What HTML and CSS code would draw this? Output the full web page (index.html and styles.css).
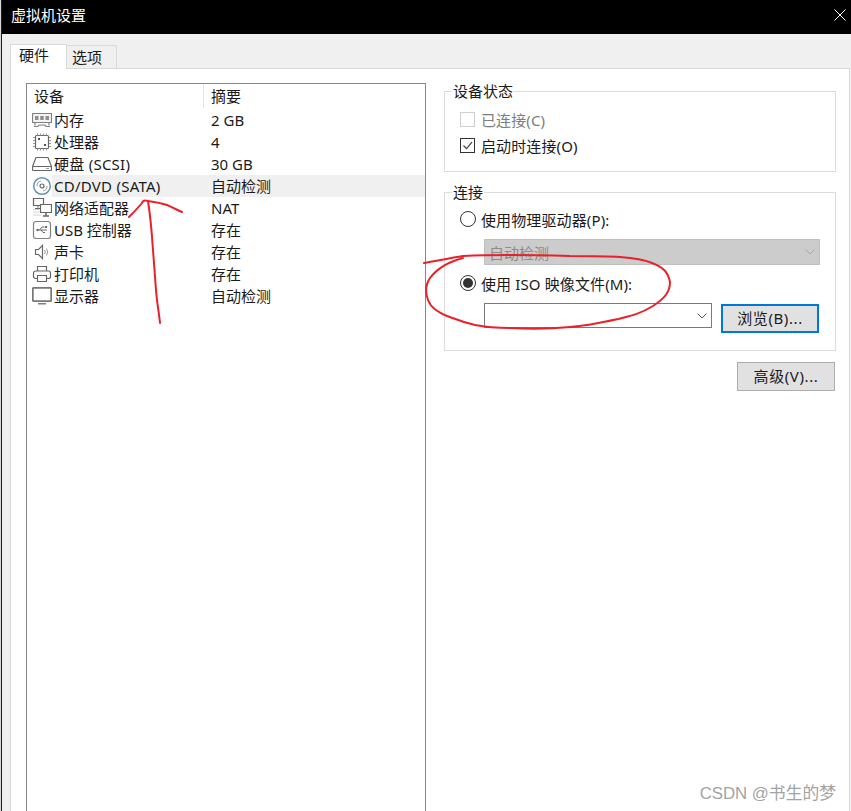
FILE: index.html
```html
<!doctype html>
<html lang="zh-CN">
  <head>
    <meta charset="UTF-8" />
    <meta name="viewport" content="width=device-width, initial-scale=1.0" />
    <title>虚拟机设置</title>
    <link rel="stylesheet" href="styles.css">
  </head>
  <body>
    <div class="window">
      <div class="titlebar">
        <span class="title">虚拟机设置</span>
        <svg class="close" width="12" height="12" viewBox="0 0 12 12"><path d="M0.5 0.5L11.5 11.5M11.5 0.5L0.5 11.5" stroke="#fff" fill="none"/></svg>
      </div>

      <div class="tabs">
        <div class="tab active">硬件</div>
        <div class="tab">选项</div>
      </div>

      <div class="page">
        <div class="device-list">
          <div class="list-head">
            <div class="head-name">设备</div>
            <div class="head-sum">摘要</div>
          </div>

          <div class="row">
            <svg class="icon" width="20" height="22" viewBox="0 0 20 22"><path d="M0.500 4.500h19v9h-19zM3 16.500v-3M17 16.500v-3M2 17.500h4l1-1.500h6l1 1.500h4" fill="#f4f4f4" stroke="#808080" stroke-width="1.200"/><path d="M3 7h3.500v4H3zM8.200 7h3.500v4H8.200zM13.500 7H17v4h-3.500z" fill="#8f8f8f"/></svg>
            <div class="row-body"><span class="name">内存</span><span class="sum">2 GB</span></div>
          </div>
          <div class="row">
            <svg class="icon" width="20" height="22" viewBox="0 0 20 22"><rect x="3.500" y="4.500" width="13" height="13" rx="1" fill="none" stroke="#666" stroke-width="1.200"/><path d="M1 6.500h2M1 9.500h2M1 12.500h2M1 15.500h2M17 6.500h2M17 9.500h2M17 12.500h2M17 15.500h2M5.500 2.500v2M8.500 2.500v2M11.500 2.500v2M14.500 2.500v2M5.500 17.500v2M8.500 17.500v2M11.500 17.500v2M14.500 17.500v2" stroke="#999"/><path d="M6 7h2v2H6zM12 13h2v2h-2z" fill="#555"/></svg>
            <div class="row-body"><span class="name">处理器</span><span class="sum">4</span></div>
          </div>
          <div class="row">
            <svg class="icon" width="20" height="22" viewBox="0 0 20 22"><path d="M0.500 13.500L4 4.500h12l3.500 9M1.500 13.500h17a1 1 0 0 1 1 1v2a1 1 0 0 1-1 1h-17a1 1 0 0 1-1-1v-2a1 1 0 0 1 1-1z" fill="none" stroke="#666" stroke-width="1.200"/><path d="M14 15.500h3" stroke="#999"/></svg>
            <div class="row-body"><span class="name wide">硬盘 (SCSI)</span><span class="sum">30 GB</span></div>
          </div>
          <div class="row">
            <svg class="icon" width="20" height="22" viewBox="0 0 20 22"><circle cx="10" cy="11" r="8.300" fill="none" stroke="#5f93b3" stroke-width="1.500"/><circle cx="10" cy="11" r="2" fill="none" stroke="#666" stroke-width="1.200"/><path d="M5 11a5 5 0 0 1 4-5M15 11a5 5 0 0 1-4 5" fill="none" stroke="#999"/></svg>
            <div class="row-body selected"><span class="name wide">CD/DVD (SATA)</span><span class="sum">自动检测</span></div>
          </div>
          <div class="row">
            <svg class="icon" width="20" height="22" viewBox="0 0 20 22"><path d="M1.500 1.500h10v7h-10zM6 8.500v2M3 11.500h6" fill="none" stroke="#666" stroke-width="1.200"/><path d="M8.500 7.500h11v8h-11z" fill="#fff" stroke="#666" stroke-width="1.200"/><path d="M14 15.500v3M11 19h6" stroke="#666" stroke-width="1.500"/><path d="M1.500 12.500h5M1.500 15h5M1.500 18h7" stroke="#a5a5a5" stroke-dasharray="1 1"/></svg>
            <div class="row-body"><span class="name">网络适配器</span><span class="sum">NAT</span></div>
          </div>
          <div class="row">
            <svg class="icon" width="20" height="22" viewBox="0 0 20 22"><rect x="1.500" y="2.500" width="17" height="17" rx="2.500" fill="none" stroke="#808080" stroke-width="1.200"/><path d="M5 11h10M7.500 11l2.500-3h2.500M9 11l2 2.500h2" fill="none" stroke="#6a6a6a"/><circle cx="5.500" cy="11" r="1.200" fill="#6a6a6a"/><path d="M13 7h2v2h-2z" fill="#6a6a6a"/></svg>
            <div class="row-body"><span class="name">USB 控制器</span><span class="sum">存在</span></div>
          </div>
          <div class="row">
            <svg class="icon" width="20" height="22" viewBox="0 0 20 22"><path d="M3.500 8.500h3l4-4v13l-4-4h-3z" fill="none" stroke="#6a6a6a" stroke-width="1.200"/><path d="M12.500 9a3 3 0 0 1 0 4M14.500 7.500a6 6 0 0 1 0 7" fill="none" stroke="#999"/></svg>
            <div class="row-body"><span class="name">声卡</span><span class="sum">存在</span></div>
          </div>
          <div class="row">
            <svg class="icon" width="20" height="22" viewBox="0 0 20 22"><path d="M5.500 8V3.500h9V8M5.500 15.500h-2a2 2 0 0 1-2-2v-3.500a2 2 0 0 1 2-2h13a2 2 0 0 1 2 2v3.500a2 2 0 0 1-2 2h-2M5.500 12.500h9v6h-9z" fill="none" stroke="#666" stroke-width="1.200"/></svg>
            <div class="row-body"><span class="name">打印机</span><span class="sum">存在</span></div>
          </div>
          <div class="row">
            <svg class="icon" width="20" height="22" viewBox="0 0 20 22"><rect x="0.800" y="2.800" width="18.400" height="13.400" rx="1" fill="none" stroke="#777" stroke-width="1.800"/><path d="M6 18h8v1.500H6z" fill="#808080"/></svg>
            <div class="row-body"><span class="name">显示器</span><span class="sum">自动检测</span></div>
          </div>
        </div>

        <div class="side">
          <fieldset class="group status-group">
            <legend>设备状态</legend>
            <div class="opt disabled"><span class="check"></span>已连接(C)</div>
            <div class="opt">
              <span class="check on">
                <svg width="13" height="13" viewBox="0 0 13 13"><path d="M2.500 6.500l3 3.200 5.500-6.500" fill="none" stroke="#444" stroke-width="1.200"/></svg>
              </span>启动时连接(O)
            </div>
          </fieldset>

          <fieldset class="group conn-group">
            <legend>连接</legend>
            <div class="opt"><span class="radio"></span>使用物理驱动器(P):</div>
            <div class="select off">
              <span>自动检测</span>
              <svg width="10" height="6" viewBox="0 0 10 6"><path d="M0.500 0.500L5 5l4.500-4.500" fill="none" stroke="#a8a8a8"/></svg>
            </div>
            <div class="opt iso"><span class="radio on"></span>使用 ISO 映像文件(M):</div>
            <div class="file-row">
              <div class="select combo">
                <span></span>
                <svg width="10" height="6" viewBox="0 0 10 6"><path d="M0.500 0.500L5 5l4.500-4.500" fill="none" stroke="#555"/></svg>
              </div>
              <div class="btn focus">浏览(B)...</div>
            </div>
          </fieldset>

          <div class="btn-row"><div class="btn">高级(V)...</div></div>
        </div>
      </div>

      <svg class="marks" width="851" height="811" viewBox="0 0 851 811">
        <path d="M160 323C159 313 157 303 156 290C155 275 154 262 153 250C152 235 151 220 148 201C145 200 143 200 142 203C138 208 133 213 129 217M148 201C155 202 161 203 167 205C172 207 177 210 182 212" fill="none" stroke="#e8212b" stroke-width="2" stroke-linecap="round"/>
        <path d="M424 263C436 261 450 258 463 256C500 254 540 255 570 256C590 256 606 256 620 257C635 258 645 260 652 263C663 267 668 272 670 282C670 292 665 298 653 306C640 314 630 316 618 319C600 323 585 326 570 327C550 329 530 329 510 328C495 328 485 327 475 325C462 322 455 319 447 316C438 312 431 308 428 300C425 292 426 284 430 278C436 270 448 262 463 258" fill="none" stroke="#e8212b" stroke-width="2" stroke-linecap="round"/>
      </svg>

      <div class="watermark">CSDN @书生的梦</div>
    </div>
  </body>
</html>
```

FILE: styles.css
```css
html,
body {
  margin: 0;
  padding: 0;
}
body {
  font-family: "Noto Sans", "Noto Sans CJK SC", sans-serif;
  font-size: 15px;
  color: #1a1a1a;
  background-color: #d8d8d8;
}
.window {
  position: relative;
  margin-left: 1px;
  height: 811px;
  overflow: hidden;
  border-left: 1px solid #1c1c1c;
  background-color: #f0f0f0;
  display: flex;
  flex-direction: column;
}
.titlebar {
  flex: none;
  box-sizing: border-box;
  height: 34px;
  padding: 0 0 5px 9px;
  display: flex;
  align-items: center;
  justify-content: space-between;
  background-color: #000;
  color: #fff;
}
.close {
  margin-right: 5px;
}
.tabs {
  flex: none;
  height: 24px;
  margin-top: 10px;
  padding-left: 8px;
  display: flex;
  align-items: flex-end;
  position: relative;
  z-index: 1;
}
.tab {
  box-sizing: border-box;
  width: 50px;
  height: 23px;
  padding-left: 5px;
  line-height: 23px;
  background-color: #f0f0f0;
  border: 1px solid #d9d9d9;
  border-bottom: none;
  border-left: none;
}
.tab.active {
  width: 57px;
  height: 25px;
  margin-bottom: -1px;
  padding-left: 8px;
  line-height: 20px;
  background-color: #fff;
  border-left: 1px solid #d9d9d9;
}
.page {
  flex: none;
  height: 760px;
  margin: 0 1px 0 8px;
  box-sizing: border-box;
  background-color: #fff;
  border: 1px solid #d9d9d9;
  padding: 14px 13px 0 15px;
  display: flex;
}
.device-list {
  box-sizing: border-box;
  width: 400px;
  height: 760px;
  border: 1px solid #828790;
  flex: none;
}
.list-head {
  height: 25px;
  display: flex;
  line-height: 25px;
}
.head-name {
  width: 169px;
  padding-left: 7px;
  border-right: 1px solid #e5e5e5;
  margin-bottom: 1px;
}
.head-sum {
  padding-left: 7px;
}
.row {
  height: 22px;
  display: flex;
  padding-left: 5px;
}
.icon {
  flex: none;
}
.row-body {
  flex: 1;
  display: flex;
  line-height: 22px;
  white-space: nowrap;
}
.row-body.selected {
  background-color: #f0f0f0;
}
.name {
  width: 157px;
  padding-left: 2px;
}
.name.wide {
  letter-spacing: 0.25px;
}
.side {
  margin-left: 18px;
  flex: 1;
}
.group {
  margin: 0;
  padding: 0 15px;
  border: 1px solid #dcdcdc;
  min-width: 0;
}
.group legend {
  padding: 0 1px;
  margin-left: -8px;
  line-height: 18px;
}
.status-group {
  box-sizing: border-box;
  height: 90px;
  margin-top: -1px;
  padding-top: 6px;
}
.conn-group {
  box-sizing: border-box;
  height: 168px;
  margin-top: 11px;
  padding-top: 5px;
}
.opt {
  height: 26px;
  display: flex;
  align-items: center;
  white-space: nowrap;
  letter-spacing: 0.12px;
}
.opt.disabled {
  color: #7d7d7d;
}
.check {
  box-sizing: border-box;
  width: 15px;
  height: 15px;
  margin-right: 6px;
  border: 1px solid #333;
  display: flex;
  align-items: center;
  justify-content: center;
}
.disabled .check {
  border-color: #cfcfcf;
}
.radio {
  box-sizing: border-box;
  width: 16px;
  height: 16px;
  margin-right: 5px;
  border: 1px solid #333;
  border-radius: 50%;
  display: flex;
  align-items: center;
  justify-content: center;
}
.radio.on::after {
  content: "";
  width: 10px;
  height: 10px;
  border-radius: 50%;
  background-color: #333;
}
.select {
  box-sizing: border-box;
  height: 26px;
  margin-left: 24px;
  padding: 0 4px;
  display: flex;
  align-items: center;
  justify-content: space-between;
  border: 1px solid #bfbfbf;
}
.select.off {
  margin-top: 7px;
  background-color: #ccc;
  color: #8c8c8c;
}
.opt.iso {
  margin-top: 5px;
}
.file-row {
  margin-top: 7px;
  display: flex;
  align-items: flex-start;
}
.combo {
  width: 228px;
  height: 25px;
  flex: none;
  border-color: #7a7a7a;
  background-color: #fff;
}
.btn {
  box-sizing: border-box;
  width: 98px;
  height: 29px;
  line-height: 27px;
  text-align: center;
  letter-spacing: 0.6px;
  background-color: #e1e1e1;
  border: 1px solid #adadad;
}
.btn.focus {
  margin-left: 9px;
  margin-top: 1px;
  line-height: 24px;
  border: 2px solid #0078d7;
}
.btn-row {
  margin-top: 11px;
  padding-right: 1px;
  display: flex;
  justify-content: flex-end;
}
.marks {
  position: absolute;
  left: -2px;
  top: 0;
  pointer-events: none;
}
.watermark {
  position: absolute;
  right: 15px;
  top: 783px;
  font-family: "Liberation Sans", "Noto Sans CJK SC", sans-serif;
  font-size: 16.8px;
  line-height: 22px;
  color: #a3a3a3;
}
```
